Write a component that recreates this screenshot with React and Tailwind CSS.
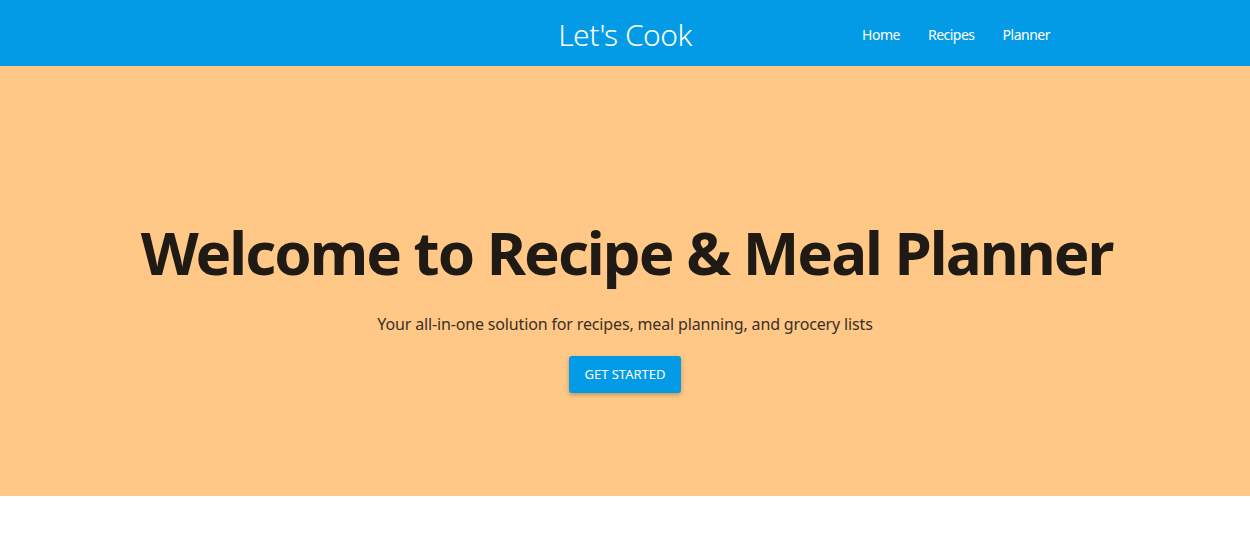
export default function App() {
  const font = { fontFamily: '"Noto Sans", "Open Sans", sans-serif' };
  return (
    <div className="min-h-[550px] bg-white" style={font}>
      <header className="h-[66px] bg-[#039be5] grid grid-cols-[1fr_auto_1fr] items-center text-white">
        <div />
        <div className="text-[30px] font-light tracking-[-0.5px] pt-[2px]">Let's Cook</div>
        <nav className="flex justify-end items-center gap-[28px] pr-[200px] pt-[3px] text-[14px] tracking-[-0.5px]">
          <a>Home</a>
          <a>Recipes</a>
          <a>Planner</a>
        </nav>
      </header>
      <section className="h-[430px] bg-[#ffc887] flex flex-col items-center pt-[146px]">
        <h1 className="text-[60px] leading-[80px] font-bold text-[#201a14] tracking-[-2px] pl-[3px]">Welcome to Recipe &amp; Meal Planner</h1>
        <p className="mt-[19px] text-[16px] leading-[26px] text-[#3a3026] tracking-[-0.15px]">Your all-in-one solution for recipes, meal planning, and grocery lists</p>
        <button className="mt-[19px] h-[37px] px-[15px] bg-[#039be5] text-white text-[13px] uppercase rounded-[3px] shadow-[0_2px_4px_rgba(0,0,0,0.25)]">Get Started</button>
      </section>
    </div>
  );
}
